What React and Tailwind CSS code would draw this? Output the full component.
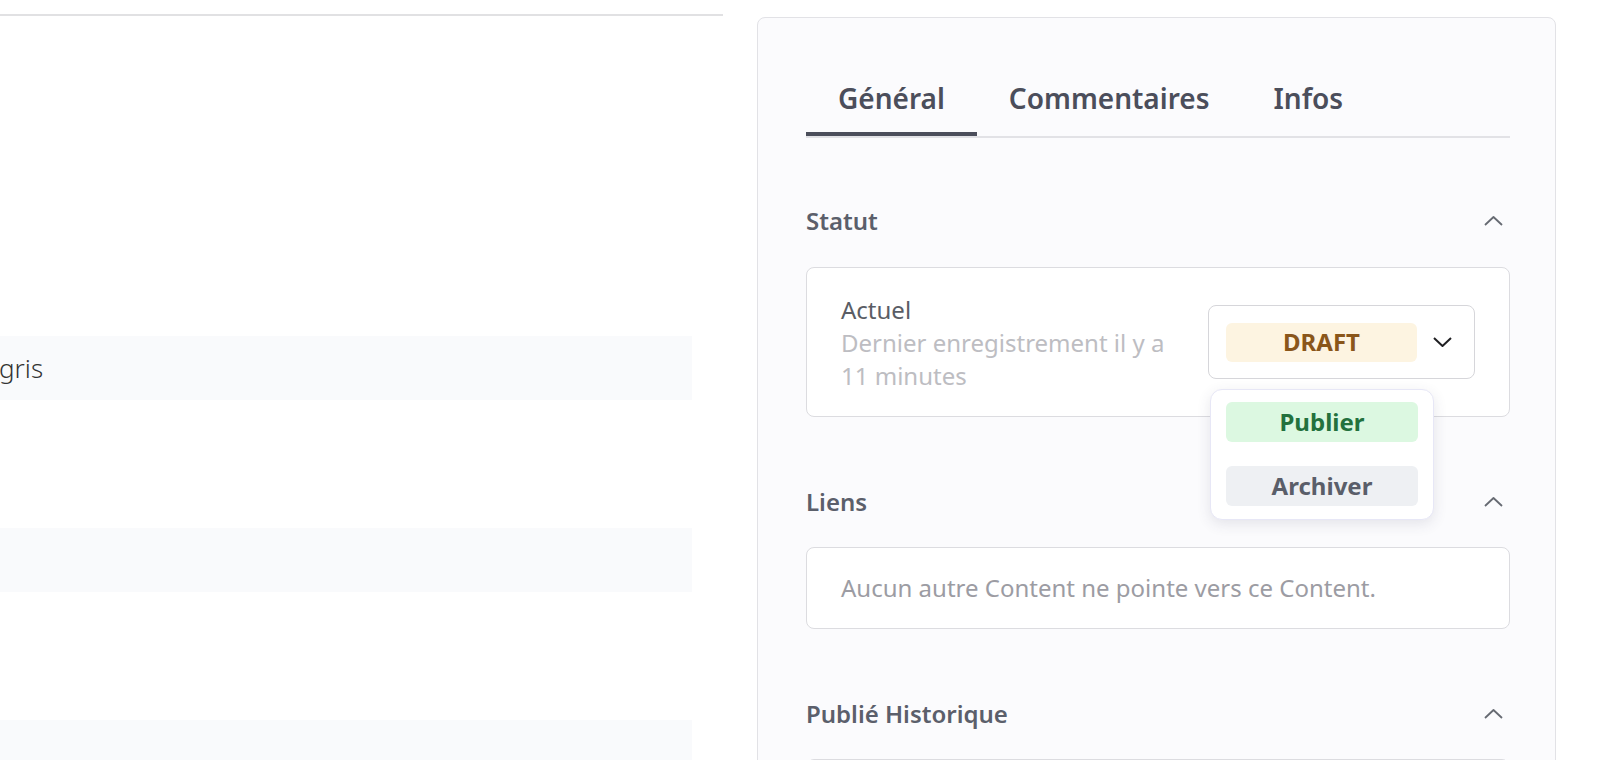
import React from 'react';

const ChevronUp = () => (
  <svg width="19" height="10" viewBox="0 0 19 10" fill="none">
    <polyline points="1,9 9.5,1 18,9" stroke="#666a72" strokeWidth="1.8" strokeLinejoin="round" />
  </svg>
);

const ChevronDown = () => (
  <svg width="19" height="10" viewBox="0 0 19 10" fill="none">
    <polyline points="1,1 9.5,9 18,1" stroke="#1f1f22" strokeWidth="2" strokeLinejoin="round" />
  </svg>
);

const SectionHeading = ({ title }) => (
  <div className="flex h-[40px] items-center justify-between pr-[7px]">
    <h3 className="text-[24px] font-semibold text-[#5b5f6b]">{title}</h3>
    <ChevronUp />
  </div>
);

const App = () => {
  const tabs = ['Général', 'Commentaires', 'Infos'];

  return (
    <div className="flex h-[760px] w-[1620px] overflow-hidden bg-white font-['Noto_Sans',sans-serif]">
      {/* Left content (cut off) */}
      <div className="w-[723px] shrink-0 pt-[14px]">
        <div className="h-[2px] bg-[#e1e1e3]"></div>
        <div className="mt-[320px] flex h-[64px] w-[692px] items-center bg-[#f9fafc]">
          <span className="-ml-[1px] text-[26px] font-light text-[#333]">gris</span>
        </div>
        <div className="mt-[128px] h-[64px] w-[692px] bg-[#f9fafc]"></div>
        <div className="mt-[128px] h-[64px] w-[692px] bg-[#f9fafc]"></div>
      </div>

      {/* Right panel */}
      <div className="ml-[34px] mt-[17px] h-[900px] w-[799px] shrink-0 rounded-[8px] border border-[#e2e2e6] bg-[#fbfbfd] pl-[48px] pr-[45px] pt-[46px]">
        <div className="flex border-b-2 border-[#e2e2e6]">
          {tabs.map((tab, i) => (
            <button
              key={tab}
              className={`border-b-4 px-[32px] pb-[16px] pt-[16px] text-[28px] font-semibold leading-[36px] text-[#4b4e5b] ${
                i === 0 ? 'border-[#4b4e5b]' : 'border-transparent'
              }`}
            >
              {tab}
            </button>
          ))}
        </div>

        {/* Statut */}
        <div className="mt-[63px]">
          <SectionHeading title="Statut" />
          <div className="mt-[26px] flex h-[150px] items-center rounded-[8px] border border-[#dcdce0] bg-white px-[34px]">
            <div className="flex-1 pr-[40px] text-[24px] leading-[33px]">
              <p className="text-[#5a5d65]">Actuel</p>
              <p className="text-[#bdbdc2]">Dernier enregistrement il y a 11 minutes</p>
            </div>
            <div className="relative">
              <div className="flex h-[74px] w-[267px] items-center rounded-[8px] border border-[#d6d6da] bg-white pl-[17px]">
                <span className="flex h-[39px] w-[191px] items-center justify-center rounded-[6px] bg-[#fdf4e1] text-[24px] font-bold text-[#8a561a]">
                  DRAFT
                </span>
                <span className="ml-[16px]">
                  <ChevronDown />
                </span>
              </div>
              <div className="absolute left-[2px] top-[84px] z-10 flex w-[224px] flex-col gap-[24px] rounded-[12px] border border-[#e7e7f6] bg-white px-[15px] pb-[13px] pt-[12px] shadow-[0_4px_14px_rgba(60,60,90,0.12)]">
                <div className="flex h-[40px] items-center justify-center rounded-[6px] bg-[#dcf8e1] text-[24px] font-bold text-[#23713d]">
                  Publier
                </div>
                <div className="flex h-[40px] items-center justify-center rounded-[6px] bg-[#eef0f3] text-[24px] font-bold text-[#5a5e69]">
                  Archiver
                </div>
              </div>
            </div>
          </div>
        </div>

        {/* Liens */}
        <div className="mt-[65px]">
          <SectionHeading title="Liens" />
          <div className="mt-[25px] flex h-[82px] items-center rounded-[8px] border border-[#dcdce0] bg-white px-[34px]">
            <p className="text-[24px] text-[#9c9ca3]">Aucun autre Content ne pointe vers ce Content.</p>
          </div>
        </div>

        {/* Publié Historique */}
        <div className="mt-[65px]">
          <SectionHeading title="Publié Historique" />
          <div className="mt-[25px] h-[82px] rounded-[8px] border border-[#dcdce0] bg-white"></div>
        </div>
      </div>
    </div>
  );
};

export default App;
